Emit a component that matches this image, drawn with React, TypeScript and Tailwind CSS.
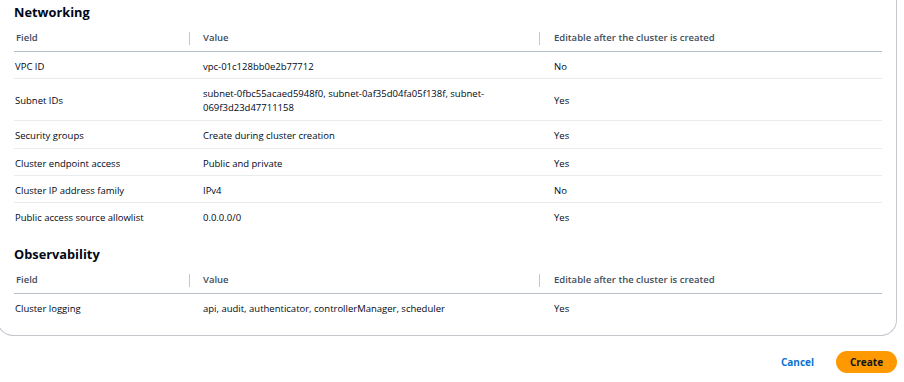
type Row = [string, React.ReactNode, string, string?];

const networking: Row[] = [
  ["VPC ID", "vpc-01c128bb0e2b77712", "No"],
  [
    "Subnet IDs",
    <>
      subnet-0fbc55acaed5948f0, subnet-0af35d04fa05f138f, subnet-
      <br />
      069f3d23d47711158
    </>,
    "Yes",
    "pb-[6px]",
  ],
  ["Security groups", "Create during cluster creation", "Yes", "pb-[6px]"],
  ["Cluster endpoint access", "Public and private", "Yes"],
  ["Cluster IP address family", "IPv4", "No"],
  ["Public access source allowlist", "0.0.0.0/0", "Yes"],
];

const observability: Row[] = [
  ["Cluster logging", "api, audit, authenticator, controllerManager, scheduler", "Yes"],
];

function HeaderRow() {
  return (
    <div className="grid grid-cols-[175px_350px_343px] border-b border-[#b6bec9] pt-[7px] pb-[6px] text-[9.5px] font-semibold leading-[14px] text-[#414d5c]">
      <div className="pl-[2px]">Field</div>
      <div className="flex items-center">
        <span className="h-[13px] w-px bg-[#c6c6cd]" />
        <span className="pl-[13px]">Value</span>
      </div>
      <div className="flex items-center">
        <span className="h-[13px] w-px bg-[#c6c6cd]" />
        <span className="pl-[14px]">Editable after the cluster is created</span>
      </div>
    </div>
  );
}

function Section({ title, rows, className }: { title: string; rows: Row[]; className?: string }) {
  return (
    <section className={className}>
      <h2 className="h-[24px] text-[12.8px] font-bold leading-[24px] text-[#000716]">{title}</h2>
      <HeaderRow />
      {rows.map(([field, value, editable, pad], i) => (
        <div
          key={field}
          className={`grid grid-cols-[175px_350px_343px] items-center pt-[8px] text-[9.5px] leading-[14px] text-[#000716] ${
            pad === "pb-[6px]" ? "pb-[5px]" : "pb-[4px]"
          } ${i < rows.length - 1 ? "border-b border-[#e9ebed]" : ""}`}
        >
          <div className="pl-[1px]">{field}</div>
          <div className="pl-[14px]">{value}</div>
          <div className="pl-[15px]">{editable}</div>
        </div>
      ))}
    </section>
  );
}

export default function App() {
  return (
    <div className="h-[382px] w-[904px] overflow-hidden bg-white font-['Open_Sans',sans-serif]">
      <div className="-ml-[3px] w-[900px] rounded-b-[16px] border-x border-b border-[#c6c6cd] pr-[14px] pb-[15px] pl-[16px]">
        <Section title="Networking" rows={networking} />
        <Section title="Observability" rows={observability} className="mt-[13px]" />
      </div>
      <div className="mt-[15px] flex items-center justify-end gap-[22px] pr-[7px]">
        <button className="text-[10px] font-bold text-[#0972d3]">Cancel</button>
        <button className="h-[22px] w-[61px] rounded-full bg-[#ff9900] text-[10px] font-bold text-[#0f141a]">
          Create
        </button>
      </div>
    </div>
  );
}
